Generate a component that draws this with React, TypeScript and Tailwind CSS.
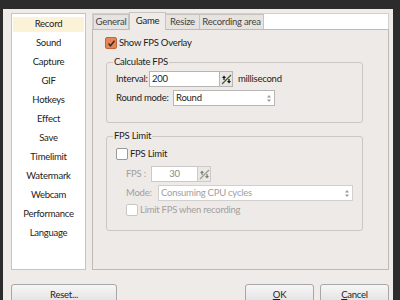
import React from "react"

const font = { fontFamily: 'Lato, "Open Sans", sans-serif' }

const items = [
  "Record",
  "Sound",
  "Capture",
  "GIF",
  "Hotkeys",
  "Effect",
  "Save",
  "Timelimit",
  "Watermark",
  "Webcam",
  "Performance",
  "Language",
]

const SpinIcon = ({ disabled }: { disabled?: boolean }) => (
  <svg width="11" height="11" viewBox="0 0 11 11" className={disabled ? "opacity-50" : ""}>
    <line x1="1" y1="10" x2="10" y2="1" stroke="#4a5a2a" strokeWidth="1.3" />
    <path d="M1 4 L3 1.5 L5 4 Z" fill="#111" />
    <path d="M6 7 L8 9.5 L10 7 Z" fill="#111" />
    <rect x="2.4" y="3.5" width="1.2" height="2.5" fill="#111" />
    <rect x="7.4" y="5" width="1.2" height="2.5" fill="#111" />
  </svg>
)

const SelectArrows = () => (
  <svg width="6" height="9" viewBox="0 0 6 9">
    <path d="M1 3.5 L3 1 L5 3.5 Z" fill="#9a9a9a" />
    <path d="M1 5.5 L3 8 L5 5.5 Z" fill="#9a9a9a" />
  </svg>
)

const Checkbox = ({ checked, disabled }: { checked?: boolean; disabled?: boolean }) =>
  checked ? (
    <span className="shrink-0 w-[12px] h-[12px] rounded-[2px] bg-[#e5855a] border border-[#c4653c] flex items-center justify-center">
      <svg width="9" height="9" viewBox="0 0 9 9">
        <path d="M1.5 4.5 L3.5 6.8 L7.5 1.8" stroke="#3a2a20" strokeWidth="1.4" fill="none" />
      </svg>
    </span>
  ) : (
    <span
      className={`shrink-0 w-[12px] h-[12px] rounded-[2px] bg-white border ${
        disabled ? "border-[#c9c6c3]" : "border-[#9a9896]"
      }`}
    />
  )

const Button = ({ children, w }: { children: React.ReactNode; w: string }) => (
  <div
    className={`${w} h-[23px] rounded-[3px] border border-[#a9a7a5] bg-gradient-to-b from-[#f6f6f6] to-[#dedede] flex items-center justify-center text-[#1e1e1e]`}
  >
    {children}
  </div>
)

export default function App() {
  return (
    <div className="w-[400px] h-[300px] bg-[#2c2c2c] overflow-hidden pt-[9px] pl-[3px] pr-[7px]" style={font}>
      <div className="h-[300px] bg-[#eeebe9] flex flex-col pt-[4px] pl-[8px] pr-[4px] text-[9.5px] tracking-[-0.25px] text-[#1c1c1c] whitespace-nowrap">
        <div className="flex gap-[6px] h-[257px]">
          {/* left list */}
          <div className="w-[78px] h-full bg-white border border-[#c6c3c0] pt-[1px] px-[1px]">
            {items.map((it, i) => (
              <div key={it} className="h-[19px] flex items-center">
                <div
                  className={`w-full h-[15px] flex items-center justify-center ${
                    i === 0 ? "bg-[#fcf2d8]" : ""
                  }`}
                >
                  {it}
                </div>
              </div>
            ))}
          </div>

          {/* tabs */}
          <div className="flex-1 flex flex-col">
            <div className="h-[16px] bg-white border-t border-x border-[#d2cfcc] flex items-end">
              <div className="w-[36px] h-[15px] border border-b-0 border-[#c6c3c0] bg-[#e6e3e1] flex items-center justify-center text-[#444]">
                General
              </div>
              <div className="w-[37px] h-[18px] -mt-[3px] border border-b-0 border-[#c6c3c0] bg-[#eeebe9] flex items-center justify-center relative top-[1px]">
                Game
              </div>
              <div className="w-[34px] h-[15px] border border-b-0 border-l-0 border-[#c6c3c0] bg-[#e6e3e1] flex items-center justify-center text-[#444]">
                Resize
              </div>
              <div className="w-[64px] h-[15px] border border-b-0 border-l-0 border-[#c6c3c0] bg-[#e6e3e1] flex items-center justify-center text-[#444]">
                Recording area
              </div>
            </div>
            <div className="flex-1 border border-[#bdbab7] bg-[#edeae8] pt-[7px] pl-[12px] pr-[25px]">
              <div className="flex items-center gap-[2px] h-[12px]">
                <Checkbox checked />
                <span>Show FPS Overlay</span>
              </div>

              {/* Calculate FPS */}
              <fieldset className="mt-[7px] ml-[1px] h-[67px] border border-[#cac7c4] rounded-[3px] px-[9px] pt-0">
                <legend className="px-[1px] ml-[-3px] leading-[12px]">Calculate FPS</legend>
                <div className="flex items-center h-[16px] mt-[3px]">
                  <span className="w-[33px]">Interval:</span>
                  <div className="w-[71px] h-[16px] bg-white border border-[#b8b6b4] flex items-center pl-[2px]">200</div>
                  <div className="w-[13px] h-[16px] bg-[#e8e6e4] border border-l-0 border-[#b8b6b4] flex items-center justify-center">
                    <SpinIcon />
                  </div>
                  <span className="ml-[5px]">millisecond</span>
                </div>
                <div className="flex items-center h-[16px] mt-[3px]">
                  <span className="w-[57px]">Round mode:</span>
                  <div className="w-[102px] h-[16px] bg-white border border-[#b8b6b4] flex items-center justify-between pl-[2px] pr-[2px]">
                    <span>Round</span>
                    <SelectArrows />
                  </div>
                </div>
              </fieldset>

              {/* FPS Limit */}
              <fieldset className="mt-[7px] ml-[1px] h-[101px] border border-[#cac7c4] rounded-[3px] px-[9px] pt-0">
                <legend className="px-[1px] ml-[-3px] leading-[12px]">FPS Limit</legend>
                <div className="flex items-center gap-[2px] h-[12px] mt-[6px]">
                  <Checkbox />
                  <span>FPS Limit</span>
                </div>
                <div className="flex items-center h-[16px] mt-[6px] pl-[10px] text-[#a3a09d]">
                  <span className="w-[25px]">FPS :</span>
                  <div className="w-[47px] h-[16px] bg-white border border-[#ccc9c6] flex items-center justify-center text-[#8a8886]">
                    30
                  </div>
                  <div className="w-[13px] h-[16px] bg-[#ebe9e7] border border-l-0 border-[#ccc9c6] flex items-center justify-center">
                    <SpinIcon disabled />
                  </div>
                </div>
                <div className="flex items-center h-[16px] mt-[3px] pl-[10px] text-[#a3a09d]">
                  <span className="w-[32px]">Mode:</span>
                  <div className="w-[195px] h-[16px] bg-white border border-[#d2cfcc] flex items-center justify-between pl-[2px] pr-[2px]">
                    <span>Consuming CPU cycles</span>
                    <SelectArrows />
                  </div>
                </div>
                <div className="flex items-center gap-[2px] h-[12px] mt-[3px] pl-[10px] text-[#a3a09d]">
                  <Checkbox disabled />
                  <span>Limit FPS when recording</span>
                </div>
              </fieldset>
            </div>
          </div>
        </div>

        {/* buttons */}
        <div className="flex mt-[14px]">
          <Button w="w-[106px]">Reset...</Button>
          <div className="flex-1" />
          <div className="flex gap-[6px]">
            <Button w="w-[69px]">
              <span>
                <span className="underline">O</span>K
              </span>
            </Button>
            <Button w="w-[69px]">
              <span>
                <span className="underline">C</span>ancel
              </span>
            </Button>
          </div>
        </div>
      </div>
    </div>
  )
}
